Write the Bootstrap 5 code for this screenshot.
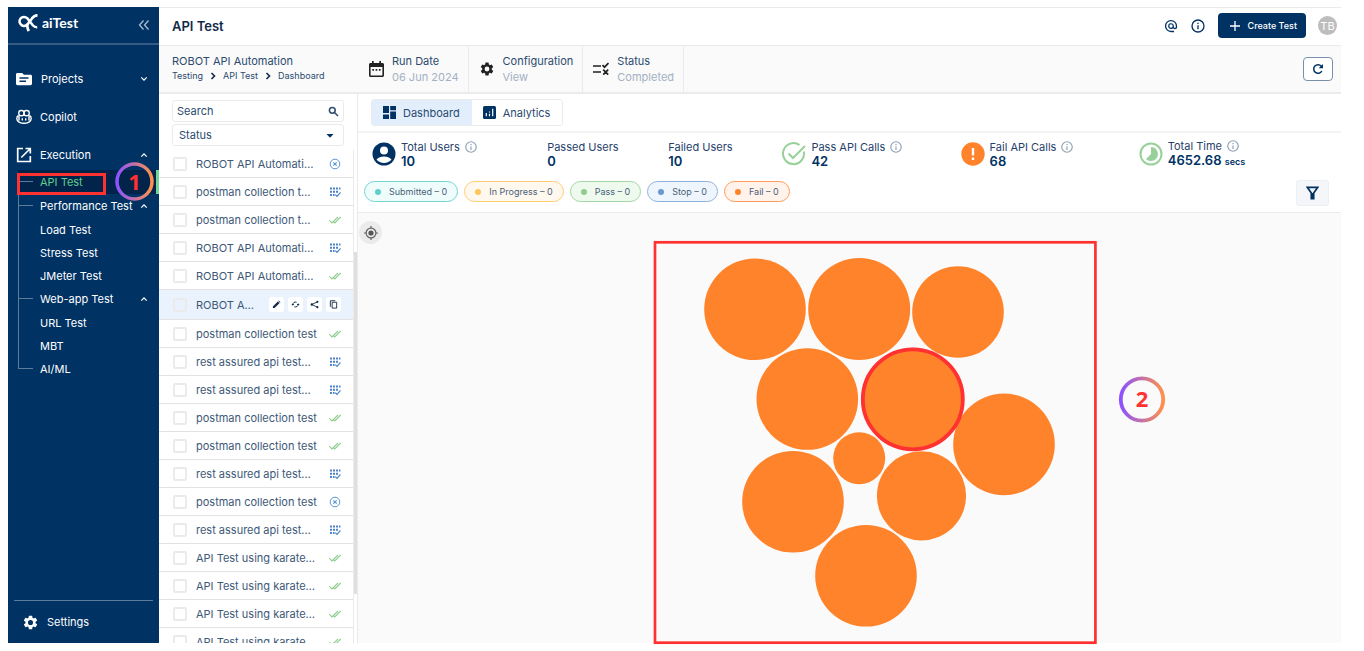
<!DOCTYPE html>
<html lang="en">
<head>
<meta charset="utf-8">
<meta name="viewport" content="width=device-width, initial-scale=1">
<title>aiTest - API Test</title>
<link href="https://cdn.jsdelivr.net/npm/bootstrap@5.3.0/dist/css/bootstrap.min.css" rel="stylesheet">
<style>
:root{--navy:#003264;--ink:#2b4b6f;--line:#ebebeb;--pale:#fafafa;--mark:#ff3131}
body{font-family:Inter,"Open Sans",sans-serif;font-size:11px;line-height:16px;color:var(--ink);background:#fff;overflow:hidden}
a{color:inherit;text-decoration:none}
svg{display:block;flex:none}
.shell{height:100vh;padding:7px 23px 8px 8px}
.side{width:151px;background:var(--navy);color:#fff;z-index:2}
.side-top{height:38px;border-bottom:2px solid #335b83;padding:0 9px 4px}
.brand{font-family:Lato,sans-serif;font-size:14px;font-weight:700}
.item{height:38px;padding:0 11px 0 8px}
.item svg:first-child{width:16px;height:16px}
.item.wide-gap{gap:1px}
.tree{margin:-4px 0 0 10px;position:relative}
.tree::before{content:"";position:absolute;left:0;top:0;bottom:12px;border-left:1px solid #5c7c9c}
.tree a{height:23px;padding:0 11px 0 22px}
.tree .branch{height:24px;position:relative}
.tree .branch::before{content:"";position:absolute;left:0;top:11px;width:15px;border-top:1px solid #5c7c9c}
.tree .current{background:#02244a;color:#5fce8f;border-right:3px solid #6fd39a}
.callout-box{position:absolute;left:-1px;top:3px;width:89px;height:22px;border:3px solid var(--mark)}
.callout-num{position:absolute;left:97px;top:-8px}
.side-foot{height:43px;margin:0 6px;padding:0 8px;border-top:1px solid #5c7c9c}
.topbar{height:39px;border-top:1px solid var(--line);border-bottom:1px solid var(--line);padding:0 4px 2px 13px}
.topbar h1{font-size:13px;line-height:16px;font-weight:600;color:#12294a}
.icon-navy{color:var(--navy)}
.create{height:25px;border-radius:4px;background:var(--navy);font-size:9px;line-height:12px;font-weight:500;padding:0 9px 0 12px}
.create:hover{background:#0b4580}
.avatar{width:19px;height:19px;background:#bdbdbd;color:#fff;font-size:11px}
.subbar{height:48px;background:var(--pale);border-bottom:2px solid var(--line);padding-right:8px}
.crumb-col{width:199px;padding:0 0 2px 13px}
.crumbs{font-size:9px;line-height:14px;gap:7px}
.fact{padding:0 9px 0 11px;border-right:1px solid var(--line)}
.fact small{display:block;font-size:11px;color:#a3b1c2}
.fact-b{padding-left:10px}
.refresh{width:30px;height:24px;border:1px solid #7890ac;border-radius:4px;background:#fff}
.list-col{width:199px;border-right:1px solid var(--line)}
.tools{padding:6px 13px 4px;gap:2px}
.field{height:22px;border:1px solid var(--line);border-radius:3px;position:relative}
.field input,.field select{font-size:11px;line-height:16px;padding:0 4px;border:0;width:100%;height:20px;background:none;color:var(--ink);appearance:none;outline:0}
.field select{padding-left:6px}
.field input::placeholder{color:var(--ink);opacity:1}
.field svg{position:absolute;right:4px;top:5px;pointer-events:none}
.rows{border-right:1px solid var(--line)}
.test{height:28px;flex:none;border-bottom:1px solid #e2e2e2;padding:0 12px 0 14px;color:#3d5878}
.test label{margin-left:9px;width:124px}
.test input{appearance:none;width:14px;height:14px;margin:0;border:2px solid #ebebeb;border-radius:2px;flex:none}
.test.on{height:30px;background:#eaf3fd}
.test.on label{width:58px}
.act{width:15px;height:15px;background:#fff;border:0;border-radius:3px;padding:0}
.track{width:3px;padding-top:102px}
.thumb{height:88%;max-height:342px;background:#dfdfdf}
.tabs-bar{height:39px;border-bottom:2px solid #f3f3f3;padding-left:13px}
.tabset{border:1px solid var(--line);border-radius:3px}
.tabset button{height:25px;border:0;background:#fff;color:var(--ink);font-size:11px;padding:0 12px 0 11px;gap:7px}
.tabset button.active{background:#e2eefc;color:var(--ink)}
.stats{display:grid;grid-template-columns:175fr 121fr 114fr 178fr 178fr 202fr;height:42px;padding-left:14px;line-height:14px;color:#1f416b}
.stats b{display:block;font-size:13px;font-weight:600;color:var(--navy)}
.stats small{font-size:9px}
.pillbar{height:38px;border-bottom:1px solid var(--line);padding:4px 12px 4px 6px;gap:6px}
.state{height:21px;border:1px solid;border-radius:11px;padding:0 10px;font-size:9px;line-height:14px;gap:8px;margin-bottom:4px}
.state i{width:6px;height:6px;border-radius:50%}
.state span{color:#4a5f78}
.s-sub{border-color:#73d6d4;background:#effcfc}.s-sub i{background:#5fcfcc}
.s-prog{border-color:#ffce73;background:#fff8ee}.s-prog i{background:#ffc65c}
.s-pass{border-color:#a4d7a4;background:#effaef}.s-pass i{background:#8fcb90}
.s-stop{border-color:#8fb2dd;background:#eef5fd}.s-stop i{background:#6699d2}
.s-fail{border-color:#ff9c5c;background:#fff3eb}.s-fail i{background:#ff832b}
.filter{width:33px;height:26px;border:1px solid #eceff3;border-radius:3px;background:#f4f6f9;margin-bottom:2px}
.board{background:var(--pale);position:relative}
.board>svg{width:100%;height:100%;overflow:visible}
.locate{position:absolute;left:1px;top:8px;width:23px;height:23px;border:0;border-radius:50%;background:#ebebeb;padding:0}
.n-mark{font-family:"Noto Sans","Open Sans",sans-serif;font-weight:700;fill:var(--mark)}
</style>
</head>
<body>
<svg width="0" height="0" class="position-absolute" aria-hidden="true">
<defs>
<linearGradient id="ring" x1="0" x2="1"><stop offset="0" stop-color="#8c52ff"/><stop offset="1" stop-color="#ff914d"/></linearGradient>
<symbol id="up" viewBox="0 0 8 6"><path d="M1.3 4.6 4 1.9l2.7 2.7" fill="none" stroke="currentColor" stroke-width="1.3"/></symbol>
<symbol id="down" viewBox="0 0 8 6"><path d="M1.3 1.4 4 4.1l2.7-2.7" fill="none" stroke="currentColor" stroke-width="1.3"/></symbol>
<symbol id="next" viewBox="0 0 6 8"><path d="M1.5 1 4.5 4l-3 3" fill="none" stroke="#12294a" stroke-width="1.6"/></symbol>
<symbol id="info" viewBox="0 0 24 24"><path fill="currentColor" d="M11 7h2v2h-2zm0 4h2v6h-2zm1-9a10 10 0 1 0 0 20 10 10 0 0 0 0-20zm0 18a8 8 0 1 1 0-16 8 8 0 0 1 0 16z"/></symbol>
<symbol id="gear" viewBox="0 0 24 24"><path fill="currentColor" d="M19.14 12.94a7.1 7.1 0 0 0 0-1.88l2.03-1.58a.5.5 0 0 0 .12-.61l-1.92-3.32a.5.5 0 0 0-.59-.22l-2.39.96a7 7 0 0 0-1.62-.94l-.36-2.54a.5.5 0 0 0-.48-.41h-3.84a.5.5 0 0 0-.47.41l-.36 2.54a7 7 0 0 0-1.62.94l-2.39-.96a.5.5 0 0 0-.59.22L2.74 8.870a.5.5 0 0 0 .12.61l2.03 1.58a7.1 7.1 0 0 0 0 1.88l-2.03 1.58a.5.5 0 0 0-.12.61l1.92 3.32c.12.22.37.29.59.22l2.39-.96c.5.38 1.03.7 1.62.94l.36 2.540c.05.24.24.41.48.41h3.84c.24 0 .44-.17.47-.41l.36-2.54a7 7 0 0 0 1.620-.94l2.390.96c.22.08.47 0 .59-.22l1.920-3.320a.5.5 0 0 0-.12-.61zM12 15.600a3.600 3.600 0 1 1 0-7.200 3.600 3.600 0 0 1 0 7.200z"/></symbol>
<symbol id="stopped" viewBox="0 0 12 12"><g fill="none" stroke="#5d95d6"><circle cx="6" cy="6" r="4.8"/><path d="M4.300 4.300l3.400 3.400m0-3.400L4.300 7.700" stroke-width="1.200"/></g></symbol>
<symbol id="queued" viewBox="0 0 12 12"><g fill="#4a84cb"><path d="M1 1.500h2v2H1zM4 1.500h2v2H4zM7 1.500h2v2H7zM10 1.500h1.500v2H10zM1 4.700h2v2H1zM4 4.700h2v2H4zM7 4.700h2v2H7zM1 8h2v2H1zM4 8h1.500v2H4z"/></g><path d="M6.200 8.600 8 10.300l3.500-4" stroke="#4a84cb" stroke-width="1.200" fill="none"/></symbol>
<symbol id="passed" viewBox="0 0 12 12"><path d="M.3 6.300 3 9l6-6M3.800 7l2 2L11.700 3" fill="none" stroke="#8fcd91" stroke-width="1.100"/></symbol>
</defs>
</svg>
<div class="shell d-flex">
<aside class="side d-flex flex-column flex-shrink-0">
  <div class="side-top d-flex align-items-center">
    <svg width="21" height="18" viewBox="0 0 21 18" fill="none" stroke="#fff"><path d="M11 9.500A4.500 4.500 0 1 1 10.200 4.200L16 11.500c1 1.200 2 1.800 4.200 1.700" stroke-width="2.500"/><path d="M20.500 1.300C17 1.200 16.500 2.500 15 4.500L11 9.800c-1 1.500-.9 4 .8 7.200" stroke-width="2.700"/></svg>
    <span class="brand ms-1">aiTest</span>
    <svg class="ms-auto mt-1" width="12" height="12" viewBox="0 0 12 12" fill="none" stroke="#a9bdd1" stroke-width="1.300"><path d="M5.500 1.500 1.500 6l4 4.500M10.500 1.500l-4 4.500 4 4.500"/></svg>
  </div>
  <nav class="flex-grow-1" style="padding-top:15px">
    <a href="#" class="item wide-gap d-flex align-items-center"><svg viewBox="0 0 16 16"><path fill="#fff" fill-rule="evenodd" d="M1.500 2h4.700l1.700 1.800h6.600c.8 0 1.500.6 1.500 1.400v7.600c0 .8-.7 1.400-1.500 1.400h-13C.7 14.200 0 13.600 0 12.800V3.400C0 2.600.7 2 1.500 2zM3.500 6.300v1.500h9V6.300zm0 3.300v1.500H10V9.600z"/></svg><span class="ms-2">Projects</span><svg class="ms-auto" width="8" height="6"><use href="#down"/></svg></a>
    <a href="#" class="item d-flex align-items-center"><svg viewBox="0 0 16 16" fill="none" stroke="#fff" stroke-width="1.400"><rect x="2.800" y="1.500" width="5.200" height="5.300" rx="2.300"/><rect x="8" y="1.500" width="5.200" height="5.300" rx="2.300"/><path d="M2.500 6.300C1.200 7 .8 8 .8 9.800c0 2.600 3.600 4.500 7.200 4.500s7.200-1.900 7.200-4.500c0-1.800-.4-2.800-1.700-3.500M3 7.200v4.300M13 7.200v4.300M6.300 9.300v2.200M9.700 9.300v2.200"/></svg><span class="ms-2">Copilot</span></a>
    <a href="#" class="item d-flex align-items-center"><svg viewBox="0 0 16 16" fill="none" stroke="#fff" stroke-width="1.700"><path d="M7 1.500H1.700v13h12.600V9M9.500 1.500h4.800v5M14.300 1.500 5.300 10.500"/></svg><span class="ms-2">Execution</span><svg class="ms-auto" width="8" height="6"><use href="#up"/></svg></a>
    <div class="tree">
      <a href="#" class="branch current d-flex align-items-center">API Test<span class="callout-box"></span>
        <svg class="callout-num" width="39" height="39" viewBox="0 0 39 39"><circle cx="19.500" cy="19.500" r="17.500" fill="none" stroke="url(#ring)" stroke-width="3.500"/><text class="n-mark" x="19.500" y="28" text-anchor="middle" font-size="22">1</text></svg></a>
      <a href="#" class="branch d-flex align-items-center">Performance Test<svg class="ms-auto" width="8" height="6"><use href="#up"/></svg></a>
      <a href="#" class="d-flex align-items-center">Load Test</a>
      <a href="#" class="d-flex align-items-center">Stress Test</a>
      <a href="#" class="d-flex align-items-center">JMeter Test</a>
      <a href="#" class="branch d-flex align-items-center">Web-app Test<svg class="ms-auto" width="8" height="6"><use href="#up"/></svg></a>
      <a href="#" class="d-flex align-items-center">URL Test</a>
      <a href="#" class="d-flex align-items-center">MBT</a>
      <a href="#" class="branch d-flex align-items-center">AI/ML</a>
    </div>
  </nav>
  <a href="#" class="side-foot d-flex align-items-center gap-2"><svg width="17" height="17"><use href="#gear"/></svg>Settings</a>
</aside>

<div class="flex-grow-1 d-flex flex-column" style="min-width:0">
  <header class="topbar d-flex align-items-center flex-shrink-0">
    <h1 class="m-0 me-auto">API Test</h1>
    <svg width="14" height="14" viewBox="0 0 24 24" fill="#003264"><path d="M12 1.500a10.500 10.500 0 0 0 0 21h5.200v-2.300H12a8.200 8.200 0 1 1 8.200-8.200v1.500c0 .9-.7 1.700-1.600 1.700s-1.600-.8-1.600-1.700V12a5 5 0 1 0-1.500 3.700c.7 1 2 1.700 3.300 1.700 2 0 3.700-1.600 3.700-3.900V12A10.500 10.500 0 0 0 12 1.500zm0 13.400a2.900 2.900 0 1 1 0-5.800 2.900 2.900 0 0 1 0 5.800z"/></svg>
    <svg class="icon-navy ms-2 me-2" style="padding:0" width="24" height="16"><use href="#info"/></svg>
    <button type="button" class="create btn btn-primary border-0 d-flex align-items-center gap-2"><svg width="10" height="10" viewBox="0 0 10 10"><path d="M5 0v10M0 5h10" stroke="#fff" stroke-width="1.300"/></svg>Create Test</button>
    <span class="avatar rounded-circle d-flex align-items-center justify-content-center" style="margin-left:12px">TB</span>
  </header>
  <div class="subbar d-flex flex-shrink-0">
    <div class="crumb-col d-flex flex-column justify-content-center">
      <div>ROBOT API Automation</div>
      <div class="crumbs d-flex align-items-center"><a href="#">Testing</a><svg width="6" height="8"><use href="#next"/></svg><a href="#">API Test</a><svg width="6" height="8"><use href="#next"/></svg><a href="#">Dashboard</a></div>
    </div>
    <div class="fact d-flex align-items-center gap-2"><svg width="15" height="17" viewBox="0 0 15 17"><path fill="#222" fill-rule="evenodd" d="M3 0h1.700v2h5.600V0H12v2h1.500c.8 0 1.500.7 1.500 1.500v11c0 .8-.7 1.500-1.500 1.500h-12C.7 16 0 15.300 0 14.500v-11C0 2.700.7 2 1.500 2H3zM1.600 6v8.400h11.800V6zM3.300 8H5v1.700H3.300zm3.300 0h1.700v1.700H6.600zm3.300 0h1.700v1.700H9.900z"/></svg><div>Run Date<small>06 Jun 2024</small></div></div>
    <div class="fact fact-b d-flex align-items-center gap-2"><svg width="16" height="18" color="#222"><use href="#gear"/></svg><div>Configuration<small>View</small></div></div>
    <div class="fact fact-b d-flex align-items-center gap-2"><svg width="16" height="14" viewBox="0 0 16 14" fill="none" stroke="#222" stroke-width="1.700"><path d="M0 4h8M0 10h8M9.500 3.200l2 2L15.500 1M10.200 7.700l5 5m0-5-5 5"/></svg><div>Status<small>Completed</small></div></div>
    <button type="button" class="refresh btn p-0 ms-auto my-auto d-flex align-items-center justify-content-center" aria-label="Refresh"><svg width="12" height="12" viewBox="0 0 12 12"><path d="M9.800 8A4.300 4.300 0 1 1 9.300 3.200" fill="none" stroke="#003264" stroke-width="1.500"/><path d="M11 1v4.300H6.700z" fill="#003264"/></svg></button>
  </div>
  <div class="d-flex flex-grow-1" style="min-height:0">
    <section class="list-col d-flex flex-column flex-shrink-0">
      <div class="tools d-flex flex-column">
        <div class="field"><input type="text" placeholder="Search" aria-label="Search"><svg width="11" height="11" viewBox="0 0 11 11" fill="none" stroke="#2b4b6f" stroke-width="1.500"><circle cx="4.300" cy="4.300" r="2.900"/><path d="m6.500 6.500 3.500 3.500"/></svg></div>
        <div class="field"><select aria-label="Status"><option>Status</option></select><svg width="15" height="11" viewBox="0 0 15 11"><path d="M2.500 4h7L6 7.700z" fill="#003264"/></svg></div>
      </div>
      <div class="d-flex flex-grow-1 overflow-hidden">
        <div class="rows flex-grow-1 d-flex flex-column overflow-hidden" id="tests"></div>
        <div class="track"><div class="thumb"></div></div>
      </div>
    </section>
    <main class="flex-grow-1 d-flex flex-column" style="min-width:0">
      <div class="tabs-bar d-flex align-items-center flex-shrink-0">
        <div class="tabset d-flex overflow-hidden" role="tablist">
          <button type="button" role="tab" aria-selected="true" class="active d-flex align-items-center"><svg width="13" height="13" viewBox="0 0 13 13" fill="#003264"><path d="M0 0h6v7H0zM7.200 0H13v4.200H7.200zM0 8.500h6V13H0zM7.200 5.500H13V13H7.200z"/></svg>Dashboard</button>
          <button type="button" role="tab" aria-selected="false" class="d-flex align-items-center"><svg width="13" height="13" viewBox="0 0 13 13"><rect width="13" height="13" rx="1.500" fill="#003264"/><path d="M3.300 7v3.300M6.500 5.500v1M6.500 7.700v2.600M9.700 2.700v7.600" stroke="#fff" stroke-width="1.200"/></svg>Analytics</button>
        </div>
      </div>
      <div class="stats align-items-center flex-shrink-0">
        <div class="d-flex align-items-center" style="gap:5px"><svg width="24" height="24" viewBox="0 0 24 24"><circle cx="12" cy="12" r="11.500" fill="#003264"/><circle cx="12" cy="8.500" r="4" fill="#fff"/><path d="M4.500 17.500c1.600-2 4.500-3 7.500-3s5.900 1 7.500 3c-1.700 2.200-4.500 3.500-7.500 3.500s-5.800-1.300-7.500-3.500z" fill="#fff"/></svg><div><span class="d-flex align-items-center gap-1">Total Users<svg width="14" height="14" color="#8ea0b5"><use href="#info"/></svg></span><b>10</b></div></div>
        <div>Passed Users<b>0</b></div>
        <div>Failed Users<b>10</b></div>
        <div class="d-flex align-items-center" style="gap:5px"><svg width="24" height="24" viewBox="0 0 24 24" fill="none" stroke="#97d199" stroke-width="2"><path d="M21.800 9.500A10.500 10.500 0 1 1 17.500 3M6.500 11.500l4.500 4.500L23 4"/></svg><div><span class="d-flex align-items-center gap-1">Pass API Calls<svg width="14" height="14" color="#8ea0b5"><use href="#info"/></svg></span><b>42</b></div></div>
        <div class="d-flex align-items-center" style="gap:5px"><svg width="24" height="24" viewBox="0 0 24 24"><circle cx="12" cy="12" r="11.700" fill="#ff832b"/><path d="M12 6v7.500M12 15.500V18" stroke="#fff" stroke-width="2.400"/></svg><div><span class="d-flex align-items-center gap-1">Fail API Calls<svg width="14" height="14" color="#8ea0b5"><use href="#info"/></svg></span><b>68</b></div></div>
        <div class="d-flex align-items-center" style="gap:5px"><svg width="24" height="24" viewBox="0 0 24 24"><circle cx="12" cy="12" r="10.500" fill="none" stroke="#97d199" stroke-width="2"/><path d="M12 5a7 7 0 1 1-5 12l5-5z" fill="#97d199"/></svg><div><span class="d-flex align-items-center gap-1">Total Time<svg width="14" height="14" color="#8ea0b5"><use href="#info"/></svg></span><b>4652.68 <small>secs</small></b></div></div>
      </div>
      <div class="pillbar d-flex align-items-center flex-shrink-0">
        <span class="state s-sub d-flex align-items-center"><i></i><span>Submitted – 0</span></span>
        <span class="state s-prog d-flex align-items-center"><i></i><span>In Progress – 0</span></span>
        <span class="state s-pass d-flex align-items-center"><i></i><span>Pass – 0</span></span>
        <span class="state s-stop d-flex align-items-center"><i></i><span>Stop – 0</span></span>
        <span class="state s-fail d-flex align-items-center"><i></i><span>Fail – 0</span></span>
        <button type="button" class="filter btn p-0 ms-auto d-flex align-items-center justify-content-center" aria-label="Filter"><svg width="13" height="14" viewBox="0 0 13 14"><path d="M1.300 1.300h10.400L7.700 7v5.700H5.300V7z" fill="none" stroke="#003264" stroke-width="1.700"/><path d="M5 7h3v6H5z" fill="#003264"/></svg></button>
      </div>
      <div class="board flex-grow-1" style="min-height:0">
        <svg viewBox="0 0 983 430" role="img" aria-label="Users by result">
          <g fill="#ff832b"><circle cx="397" cy="96.300" r="50.800"/><circle cx="501.200" cy="96" r="51"/><circle cx="600" cy="99" r="45.800"/><circle cx="449.300" cy="186" r="50.800"/><circle cx="646" cy="231.400" r="50.800"/><circle cx="501.200" cy="245.200" r="26"/><circle cx="435" cy="288.700" r="50.800"/><circle cx="563.500" cy="282.800" r="44.600"/><circle cx="508" cy="362.800" r="50.800"/><circle cx="554.800" cy="186.300" r="50" stroke="#ff3131" stroke-width="3.800"/></g>
          <rect x="297" y="29.300" width="440.400" height="400.400" fill="none" stroke="#ff3131" stroke-width="2.700"/>
          <circle cx="784" cy="186.500" r="21.200" fill="none" stroke="url(#ring)" stroke-width="3.800"/>
          <text class="n-mark" x="784" y="194" text-anchor="middle" font-size="22">2</text>
        </svg>
        <button type="button" class="locate d-flex align-items-center justify-content-center" aria-label="Center view"><svg width="14" height="14" viewBox="0 0 14 14" fill="none" stroke="#666" stroke-width="1.200"><circle cx="7" cy="7" r="4.900"/><circle cx="7" cy="7" r="2.600" fill="#555" stroke="none"/><path d="M7 0v2.500M7 11.500V14M0 7h2.500M11.500 7H14"/></svg></button>
      </div>
    </main>
  </div>
</div>
</div>
<script src="https://cdn.jsdelivr.net/npm/bootstrap@5.3.0/dist/js/bootstrap.bundle.min.js"></script>
<script>
const tests = [
  ['ROBOT API Automati...','stopped'],['postman collection t...','queued'],['postman collection t...','passed'],
  ['ROBOT API Automati...','queued'],['ROBOT API Automati...','passed'],['ROBOT A...',null],
  ['postman collection test','passed'],['rest assured api test...','queued'],['rest assured api test...','queued'],
  ['postman collection test','passed'],['postman collection test','passed'],['rest assured api test...','queued'],
  ['postman collection test','stopped'],['rest assured api test...','queued'],['API Test using karate...','passed'],
  ['API Test using karate...','passed'],['API Test using karate...','passed'],['API Test using karate...','passed']];
const actions = [
  ['Edit','<path d="M1 7.200V9h1.800l5.500-5.500-1.800-1.800zM7 1.200l1.800 1.800.6-.6L7.600.6z" fill="#12294a"/>'],
  ['Rerun','<path d="M2 5.500A3 3 0 0 1 6.200 2.500M8 4.500A3 3 0 0 1 3.800 7.500" fill="none" stroke="#12294a" stroke-width="1.100"/><path d="M.5 4.500h3L2 6.500zM6.500 5.500h3L8 3.500z" fill="#12294a"/>'],
  ['Share','<path d="M8.300 2 2 5l6.300 3" fill="none" stroke="#12294a"/><circle cx="8.200" cy="2" r="1.200" fill="#12294a"/><circle cx="2" cy="5" r="1.300" fill="#12294a"/><circle cx="8.200" cy="8" r="1.200" fill="#12294a"/>'],
  ['Copy','<path d="M3.500 2.500h5v6.500h-5zM1.500 7.500V.8H7" fill="none" stroke="#12294a"/>']];
document.getElementById('tests').innerHTML = tests.map(([name, state], i) =>
  `<div class="test d-flex align-items-center${state ? '' : ' on'}"><input type="checkbox" id="t${i}"><label for="t${i}" class="text-nowrap">${name.replace('...', '…')}</label>` +
  (state ? `<svg class="ms-auto" width="12" height="12"><use href="#${state}"/></svg>`
         : `<span class="ms-auto d-flex gap-1">${actions.map(([t, p]) => `<button type="button" class="act d-flex align-items-center justify-content-center" aria-label="${t}"><svg width="9" height="9" viewBox="0 0 10 10">${p}</svg></button>`).join('')}</span>`) +
  '</div>').join('');
</script>
</body>
</html>
